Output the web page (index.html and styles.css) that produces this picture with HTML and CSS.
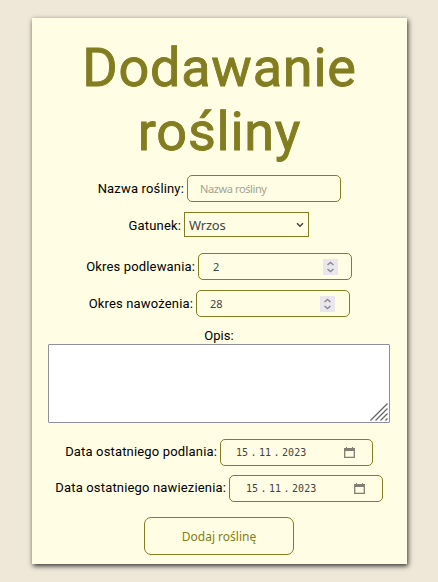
FILE: index.html
```html
<!DOCTYPE html>
<html lang="pl">
<head>
<meta charset="utf-8">
<title>Dodawanie rośliny</title>
<link rel="stylesheet" href="styles.css">
</head>
<body>
<form class="card">
  <h1>Dodawanie<br>rośliny</h1>
  <div class="row name"><label for="name">Nazwa rośliny:</label><span class="field"><input id="name" type="text" placeholder="Nazwa rośliny"></span></div>
  <div class="row species"><label for="species">Gatunek:</label><span class="select"><select id="species"><option>Wrzos</option></select><svg width="8" height="6" viewBox="0 0 8 6"><path d="M1 1.2 4 4.2 7 1.2"/></svg></span></div>
  <div class="row water"><label for="water">Okres podlewania:</label><span class="field"><input id="water" type="text" value="2"><svg class="spin" width="15" height="16" viewBox="0 0 15 16"><path d="M4.500 6 7.500 3.500 10.500 6M4.500 10 7.500 12.500 10.500 10"/></svg></span></div>
  <div class="row feed"><label for="feed">Okres nawożenia:</label><span class="field"><input id="feed" type="text" value="28"><svg class="spin" width="15" height="16" viewBox="0 0 15 16"><path d="M4.500 6 7.500 3.500 10.500 6M4.500 10 7.500 12.500 10.500 10"/></svg></span></div>
  <label class="caption" for="notes">Opis:</label>
  <div class="area"><textarea id="notes"></textarea><svg class="grip" width="18" height="18" viewBox="0 0 18 18"><path d="M.5 17.5 17.5.5M5.500 17.5 17.5 5.500M10.500 17.5 17.5 10.500M15.500 17.5 17.5 15.500"/></svg></div>
  <div class="row watered"><label>Data ostatniego podlania:</label><span class="field date"><span>15</span><span class="dot">.</span><span>11</span><span class="dot">.</span><span>2023</span><svg class="cal" width="11" height="11" viewBox="0 0 11 11"><path class="ring" d="M.7 2h9.600v8.300H.7z"/><path d="M0 1h11v3H0zM2 0h1v2H2zM8 0h1v2H8z"/></svg></span></div>
  <div class="row fed"><label>Data ostatniego nawiezienia:</label><span class="field date"><span>15</span><span class="dot">.</span><span>11</span><span class="dot">.</span><span>2023</span><svg class="cal" width="11" height="11" viewBox="0 0 11 11"><path class="ring" d="M.7 2h9.600v8.300H.7z"/><path d="M0 1h11v3H0zM2 0h1v2H2zM8 0h1v2H8z"/></svg></span></div>
  <button type="button">Dodaj roślinę</button>
</form>
</body>
</html>
```

FILE: styles.css
```css
* { box-sizing: border-box; }
body { margin: 0; padding: 18px 31px 18px 32px; background: #efe8d9; overflow: hidden; }
.card {
  width: 375px; height: 546px; padding-top: 18px;
  background: #fffde3; color: #000;
  box-shadow: 1px 2px 5px rgba(0, 0, 0, .8);
  font: 13px/16px Roboto, sans-serif;
}
h1 { margin: 0; font-size: 54px; font-weight: 400; line-height: 64px; letter-spacing: .75px; color: #827d20; text-align: center; -webkit-text-stroke: .9px #827d20; }
.row { display: flex; align-items: center; justify-content: flex-end; gap: 3px; height: 27px; }
.row label { white-space: nowrap; letter-spacing: .16px; }
.field { display: flex; align-items: center; width: 154px; height: 27px; border: 1px solid #827d20; border-radius: 5px; padding: 0 12px; color: #444; }
.field input { flex: 1; min-width: 0; padding: 0; border: 0; background: none; outline: 0; color: #444; font: 11px "Noto Sans", sans-serif; }
.name input { letter-spacing: -.4px; }
.field input::placeholder { color: #a5a392; opacity: 1; }
svg path { fill: none; stroke: #444; stroke-width: 1.5; }
.name { margin-top: 11px; padding-right: 66px; }
.species { margin-top: 10px; padding-right: 98px; height: 25px; }
.species label { padding-top: 2px; }
.select { display: flex; align-items: center; width: 125px; height: 25px; border: 1px solid #827d20; padding: 0 4px; }
.select select { flex: 1; appearance: none; border: 0; padding: 0; background: none; color: #444; font: 13px "Noto Sans", sans-serif; letter-spacing: -.2px; }
.water { margin-top: 16px; padding-right: 55px; }
.water input { padding-left: 2px; }
.feed { margin-top: 10px; padding-right: 57px; }
.feed input { padding-left: 1px; }
.spin { background: #e9e7ec; margin-right: 1px; }
.feed .spin { margin-right: 2px; }
.spin path { stroke: #8b8a93; }
.caption { display: block; margin-top: 11px; height: 16px; padding-right: 1px; text-align: center; }
.area { position: relative; width: 342px; height: 79px; margin-left: 16px; }
textarea { display: block; width: 100%; height: 100%; border: 1px solid #8f8f9d; border-radius: 1px; resize: none; background: #fff; }
.grip { position: absolute; right: 2px; bottom: 2px; }
.grip path { stroke: #666; stroke-width: 1.25; }
.watered { margin-top: 16px; padding-right: 34px; }
.watered .field { width: 153px; padding-left: 15px; }
.watered label, .fed label { padding-bottom: 2px; }
.fed { margin-top: 9px; padding-right: 24px; }
.date { padding-left: 16px; padding-right: 17px; font: 10px "DejaVu Sans Mono", monospace; }
.date .dot { width: 11px; text-align: center; }
.cal { margin-left: auto; }
.cal path { fill: #817f74; stroke: none; }
.cal .ring { fill: none; stroke: #817f74; stroke-width: 1.3; }
button { display: block; width: 150px; height: 38px; margin: 15px 0 0 112px; border: 1px solid #827d20; border-radius: 7px; background: transparent; color: #827d20; font: 12px "Noto Sans", sans-serif; }
```
